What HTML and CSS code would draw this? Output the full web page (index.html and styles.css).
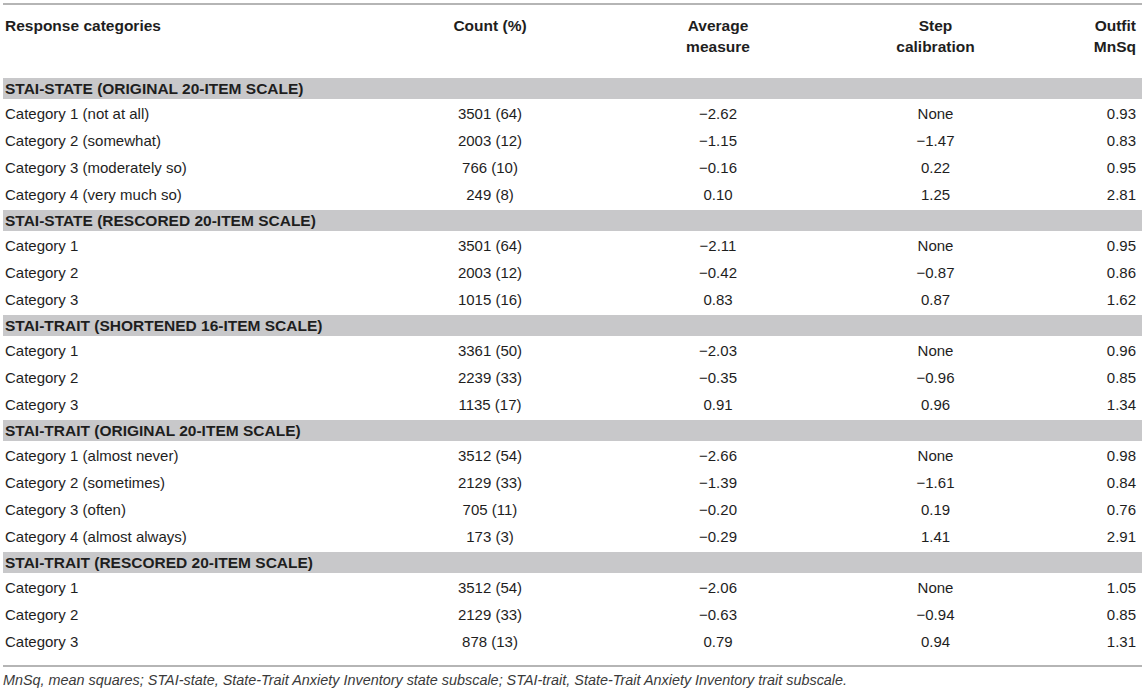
FILE: index.html
```html
<!DOCTYPE html>
<html>
<head>
<meta charset="utf-8">
<link rel="stylesheet" href="styles.css">
</head>
<body>
<div class="wrap">
<table class="tbl">
<colgroup>
<col class="c1"><col class="c2"><col class="c3"><col class="c4"><col class="c5">
</colgroup>
<thead>
<tr>
<th class="l">Response categories</th>
<th>Count (%)</th>
<th>Average<br>measure</th>
<th>Step<br>calibration</th>
<th class="r">Outfit<br>MnSq</th>
</tr>
</thead>
<tbody>
<tr class="band first"><td colspan="5">STAI-STATE (ORIGINAL 20-ITEM SCALE)</td></tr>
<tr><td>Category 1 (not at all)</td><td>3501 (64)</td><td>−2.62</td><td>None</td><td>0.93</td></tr>
<tr><td>Category 2 (somewhat)</td><td>2003 (12)</td><td>−1.15</td><td>−1.47</td><td>0.83</td></tr>
<tr><td>Category 3 (moderately so)</td><td>766 (10)</td><td>−0.16</td><td>0.22</td><td>0.95</td></tr>
<tr><td>Category 4 (very much so)</td><td>249 (8)</td><td>0.10</td><td>1.25</td><td>2.81</td></tr>
<tr class="band"><td colspan="5">STAI-STATE (RESCORED 20-ITEM SCALE)</td></tr>
<tr><td>Category 1</td><td>3501 (64)</td><td>−2.11</td><td>None</td><td>0.95</td></tr>
<tr><td>Category 2</td><td>2003 (12)</td><td>−0.42</td><td>−0.87</td><td>0.86</td></tr>
<tr><td>Category 3</td><td>1015 (16)</td><td>0.83</td><td>0.87</td><td>1.62</td></tr>
<tr class="band"><td colspan="5">STAI-TRAIT (SHORTENED 16-ITEM SCALE)</td></tr>
<tr><td>Category 1</td><td>3361 (50)</td><td>−2.03</td><td>None</td><td>0.96</td></tr>
<tr><td>Category 2</td><td>2239 (33)</td><td>−0.35</td><td>−0.96</td><td>0.85</td></tr>
<tr><td>Category 3</td><td>1135 (17)</td><td>0.91</td><td>0.96</td><td>1.34</td></tr>
<tr class="band"><td colspan="5">STAI-TRAIT (ORIGINAL 20-ITEM SCALE)</td></tr>
<tr><td>Category 1 (almost never)</td><td>3512 (54)</td><td>−2.66</td><td>None</td><td>0.98</td></tr>
<tr><td>Category 2 (sometimes)</td><td>2129 (33)</td><td>−1.39</td><td>−1.61</td><td>0.84</td></tr>
<tr><td>Category 3 (often)</td><td>705 (11)</td><td>−0.20</td><td>0.19</td><td>0.76</td></tr>
<tr><td>Category 4 (almost always)</td><td>173 (3)</td><td>−0.29</td><td>1.41</td><td>2.91</td></tr>
<tr class="band"><td colspan="5">STAI-TRAIT (RESCORED 20-ITEM SCALE)</td></tr>
<tr><td>Category 1</td><td>3512 (54)</td><td>−2.06</td><td>None</td><td>1.05</td></tr>
<tr><td>Category 2</td><td>2129 (33)</td><td>−0.63</td><td>−0.94</td><td>0.85</td></tr>
<tr class="last"><td>Category 3</td><td>878 (13)</td><td>0.79</td><td>0.94</td><td>1.31</td></tr>
</tbody>
</table>
<p class="note">MnSq, mean squares; STAI-state, State-Trait Anxiety Inventory state subscale; STAI-trait, State-Trait Anxiety Inventory trait subscale.</p>
</div>
</body>
</html>
```
FILE: styles.css
```css
html, body {
  margin: 0;
  padding: 0;
  background: #ffffff;
}
body {
  font-family: "Liberation Sans", Arial, sans-serif;
  font-size: 15px;
  color: #1e1e1e;
}
.wrap {
  padding: 3px 3px 0 3px;
  width: 1139px;
}
.tbl {
  width: 1139px;
  table-layout: fixed;
  border-collapse: collapse;
  border-top: 2px solid #b5b5b5;
  border-bottom: 2px solid #b5b5b5;
}
.c1 { width: 367px; }
.c2 { width: 240px; }
.c3 { width: 216px; }
.c4 { width: 219px; }
.c5 { width: 97px; }
.tbl th {
  font-weight: bold;
  font-size: 15.5px;
  text-align: center;
  vertical-align: top;
  line-height: 21px;
  padding: 10px 2px 10px 2px;
  border-bottom: 2px solid #c4c4c4;
}
.tbl th.l { text-align: left; }
.tbl th.r { text-align: right; padding-right: 6px; }
.tbl td {
  text-align: center;
  line-height: 18px;
  padding: 4px 2px 5px 2px;
  white-space: nowrap;
}
.tbl td:first-child { text-align: left; }
.tbl td:last-child { text-align: right; padding-right: 6px; }
.tbl tr.band td {
  text-align: left;
  font-weight: bold;
  font-size: 15.5px;
  background: #c8c8ca;
  background-clip: padding-box;
  line-height: 21px;
  padding: 0 2px;
  border-top: 1px solid #ffffff;
  border-bottom: 2px solid #ffffff;
}
.tbl tr.band.first td { border-top: 11px solid #ffffff; }
.tbl tr.last td { padding-bottom: 14px; }
.note {
  margin: 5px 0 0 0;
  font-size: 14.4px;
  font-style: italic;
  color: #3a3a3a;
  line-height: 17px;
}
```
